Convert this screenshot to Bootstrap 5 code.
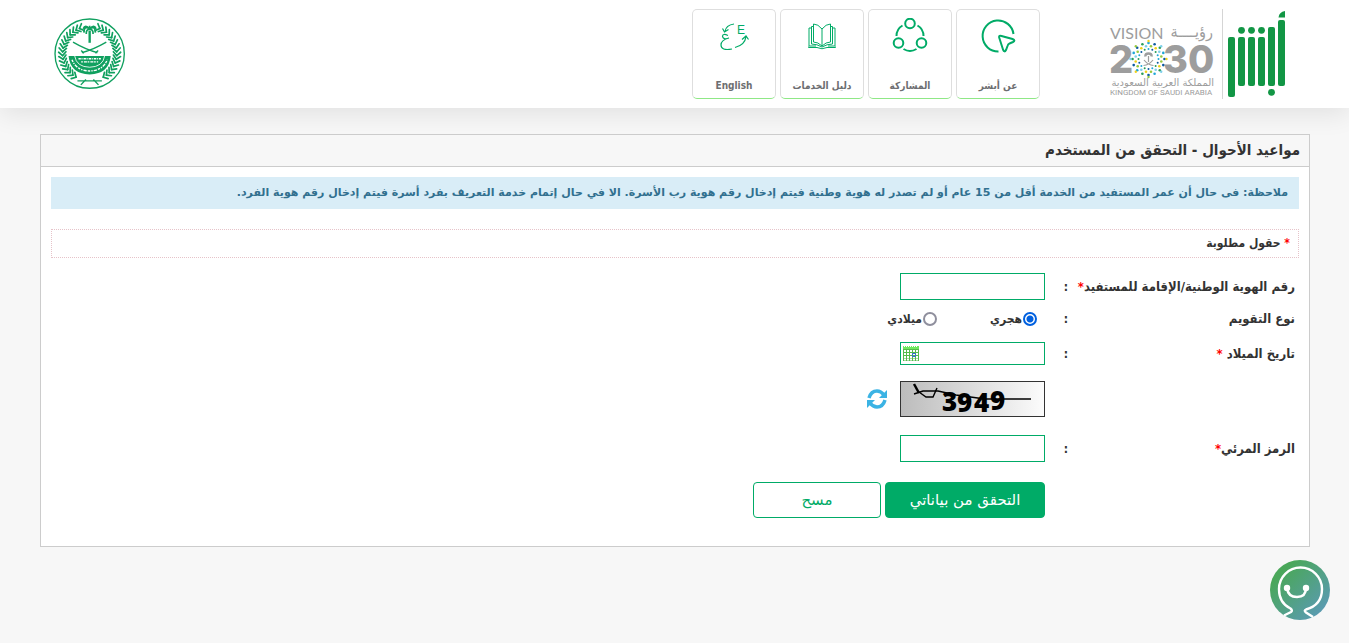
<!DOCTYPE html>
<html lang="ar" dir="rtl">
<head>
<meta charset="utf-8">
<meta name="viewport" content="width=device-width, initial-scale=1">
<title>مواعيد الأحوال - التحقق من المستخدم</title>
<link href="https://cdn.jsdelivr.net/npm/bootstrap@5.3.0/dist/css/bootstrap.min.css" rel="stylesheet">
<style>
:root{--absher:#00ab67;--ink:#333}
body{background:#f7f7f7;color:var(--ink);font-family:"DejaVu Sans Condensed","DejaVu Sans",sans-serif;font-size:12px;font-weight:700;line-height:20px}
.top-bar{background:#fff;min-height:108px;padding:9px 61px 7px 54px;box-shadow:0 6px 24px rgba(0,0,0,.09)}
.brand{width:180px;height:92px;display:block;margin-top:-1px;overflow:visible}
.tiles{margin-right:68px;gap:4px}
.tile{width:84px;height:90px;border:1px solid #dedede;border-bottom-color:#8fe886;border-radius:5px;background:#fff;color:#6d6e71;font-size:10px;line-height:16px;text-decoration:none;padding:8px 0 4px}
.tile svg{width:36px;height:36px;fill:none;stroke:var(--absher);stroke-width:2}
.moi{width:72px;height:72px;margin-top:9px;margin-right:auto}
.page-wrap{padding:26px 39px 0 40px}
.panel{background:#fff;border:1px solid #ccc;padding-bottom:28px}
.panel-title{background:#f7f7f7;border-bottom:1px solid #ccc;font-size:15px;font-weight:700;line-height:20px;padding:5px 9px 6px;margin:0}
.panel-main{padding:10px 10px 0}
.note{background:#d9edf7;color:#31708f;padding:6px 11px;margin-bottom:20px;font-family:"DejaVu Sans",sans-serif;font-size:11px}
.required-box{border:1px dotted #e6c3c9;padding:3px 8px 4px;margin-bottom:15px}
.star{color:#f00}
.field{display:grid;grid-template-columns:227px 27px 1fr;align-items:center}
.field>.name{padding-right:4px;white-space:nowrap;font-size:13px}
.field-id{margin-bottom:9px}
.field-type{margin-bottom:13px}
.captcha-row{margin-bottom:18px}
.code-row{margin-bottom:20px}
.colon{padding-right:4px}
.choices{padding-right:8px}
.choice{width:100px;gap:1px}
.captcha{gap:13px}
.captcha-art{overflow:visible}
.entry{width:145px;height:27px;border:1px solid var(--absher);border-radius:0;background:#fff;padding:2px 6px}
.entry.short{height:23px}
.date-box{position:relative;width:145px;height:23px}
.cal{position:absolute;left:3px;top:3px;border:0;background:none;padding:0;width:16px;height:16px;line-height:0}
.pick{appearance:none;width:14px;height:14px;border:2px solid #8f8f9d;border-radius:50%;margin:0;background:#fff}
.pick:checked{border-color:#0060df;background:radial-gradient(circle,#0060df 3px,#fff 4px)}
.act{height:36px;border:1px solid var(--absher);border-radius:4px;font-family:"DejaVu Sans",sans-serif;font-size:15px;font-weight:400;padding:0}
.act-go{width:160px;background:var(--absher);color:#fff}
.act-clear{width:128px;background:#fff;color:var(--absher)}
.refresh{border:0;background:none;padding:0;width:20px;height:20px;line-height:0}
.helper{position:fixed;right:19px;bottom:23px;width:60px;height:60px;border:0;background:none;padding:0}
</style>
</head>
<body>
<header class="top-bar d-flex align-items-start">
  <a href="#" aria-label="أبشر">
  <svg class="brand" viewBox="0 0 180 92" direction="ltr">
    <g fill="#129645">
      <rect x="120" y="29" width="7" height="60" rx="2"/>
      <rect x="130" y="29" width="7" height="49" rx="2"/>
      <rect x="140" y="29" width="7" height="49" rx="2"/>
      <rect x="150" y="29" width="7" height="49" rx="2"/>
      <rect x="160" y="19" width="7" height="59" rx="2"/>
      <rect x="170" y="12" width="7" height="66" rx="2"/>
      <path d="M170.500 9.500Q171 4 177 3V9.500Z"/>
      <circle cx="133.500" cy="22.300" r="3.400"/><circle cx="143.500" cy="22.300" r="3.400"/><circle cx="153.500" cy="22.300" r="3.400"/><circle cx="163.500" cy="84.300" r="3.400"/>
    </g>
    <path d="M114.500 1V91" stroke="#d5d5d5"/>
    <g fill="#9d9d9d" direction="ltr">
      <text x="2" y="31" font-family="Lato" font-weight="400" font-size="16">VISION</text>
      <text x="105" y="29" direction="rtl" font-family="DejaVu Sans Condensed" font-weight="400" font-size="16">رؤيــــة</text>
      <text x="1" y="65" font-family="Inter" font-weight="800" font-size="38">2</text>
      <text x="55" y="65" font-family="Inter" font-weight="800" font-size="38">30</text>
      <text x="106" y="78" direction="rtl" font-family="DejaVu Sans" font-weight="400" font-size="10">المملكة العربية السعودية</text>
      <text x="2" y="87" font-family="Roboto" font-weight="400" font-size="8">KINGDOM OF SAUDI ARABIA</text>
    </g>
    <g id="mosaic"></g>
    <g stroke="#9d9d9d" fill="none"><path d="M40.500 48V54M35.500 57.500Q41 57 45 52M45.500 57.500Q40 57 36 52" stroke-width="1.200"/><path d="M37.500 48.500Q37 45.500 40.500 45.500T43.500 48.500" stroke-width="2.500"/></g>
  </svg></a>

  <nav class="tiles d-flex">
    <a class="tile d-flex flex-column align-items-center justify-content-between" href="#">
      <svg viewBox="0 0 36 36"><path d="M33.500 16A15.500 15.500 0 1 0 18.500 33.500M19.500 20.500Q18 17 21.500 18L32.500 21Q36 22.500 33 24L29.500 25.500Q28 26 27.500 28L26 32Q24.500 35 23 31.500Z"/></svg>عن أبشر</a>
    <a class="tile d-flex flex-column align-items-center justify-content-between" href="#">
      <svg viewBox="0 0 36 36"><circle cx="18" cy="5.500" r="4.800"/><circle cx="6.500" cy="25" r="4.800"/><circle cx="29.500" cy="25" r="4.800"/><path d="M10.500 7.500Q4.500 11 4.500 18M25.500 7.500Q31.500 11 31.500 18M11.500 31Q18 35 24.500 31"/></svg>المشاركة</a>
    <a class="tile d-flex flex-column align-items-center justify-content-between" href="#">
      <svg viewBox="0 0 36 36" style="stroke-width:1"><path d="M18 11Q14 6 9.500 6V24Q14 24 18 28Q22 24 26.500 24V6Q22 6 18 11V28M9.500 8.500H7.500V26Q13 26 18 29Q23 26 28.500 26V8.500H26.500M7.500 10H5V28H12M28.500 10H31V28H24M4.500 28.500V29.500H13Q18 32 23 29.500H31.500V28.500"/></svg>دليل الخدمات</a>
    <a class="tile d-flex flex-column align-items-center justify-content-between" href="#" lang="en">
      <svg viewBox="0 0 36 36" style="stroke-width:1.200"><path d="M18 6Q10 7 9 13.500M6.500 10.500L8.500 14L12.500 11.500M12 17.500Q6.500 15 6.500 18.500Q7.500 22 13 20Q5 22 5 27Q5 33 16 31M19 29.500Q29 27 30 18.500M26 21.500L30 18L32.500 21.500"/><text x="21" y="16" font-family="Liberation Sans" font-size="12" font-weight="400" fill="#00ab67" stroke="none" direction="ltr">E</text></svg>English</a>
  </nav>

  <svg class="moi" viewBox="46 25 212 212" role="img" aria-label="وزارة الداخلية">
    <g fill="none" stroke="#10a05f"><circle cx="151" cy="130" r="102" stroke-width="4"/>
      <g id="laurel" stroke-width="5" stroke-linecap="round"></g>
      <g stroke-width="4"><path d="M102 96Q140 118 174 127M200 96Q162 118 128 127M126 121L134 129M176 121L168 129"/>
      <path d="M151 62V98" stroke-width="7"/>
      <path d="M151 58Q135 45 134 68M151 58Q167 45 168 68M151 58Q140 58 141 72M151 58Q162 58 161 72M151 58V48M151 58Q138 42 132 57M151 58Q164 42 170 57" stroke-width="5"/>
      <path d="M115 210H187M125 222L140 206M177 222L162 206" stroke-width="4"/></g></g>
    <path d="M89 137H213Q208 190 151 191Q94 190 89 137Z" fill="#10a05f"/>
    <g fill="none" stroke="#fff"><path d="M107 137Q112 169 151 170Q190 169 195 137" stroke-width="2.500"/><path d="M118 145H184" stroke-width="4" stroke-dasharray="7 2 3 3"/><path d="M126 154H176" stroke-width="4" stroke-dasharray="5 3 9 2"/><path d="M99 148Q112 180 151 181Q190 180 203 148" stroke-width="4" stroke-dasharray="7 3 4 3 10 3"/></g>
  </svg>
</header>

<main class="page-wrap">
  <section class="panel">
    <h1 class="panel-title">مواعيد الأحوال - التحقق من المستخدم</h1>
    <form class="panel-main" onsubmit="return false">
      <div class="note">ملاحظة: فى حال أن عمر المستفيد من الخدمة أقل من 15 عام أو لم تصدر له هوية وطنية فيتم إدخال رقم هوية رب الأسرة. الا في حال إتمام خدمة التعريف بفرد أسرة فيتم إدخال رقم هوية الفرد.</div>
      <div class="required-box"><span class="star">*</span> حقول مطلوبة</div>

      <div class="field field-id">
        <label class="name" for="nid">رقم الهوية الوطنية/الإقامة للمستفيد<span class="star">*</span></label>
        <span class="colon">:</span>
        <input class="entry" id="nid" type="text">
      </div>
      <div class="field field-type" role="radiogroup" aria-labelledby="caltype">
        <span class="name" id="caltype">نوع التقويم</span>
        <span class="colon">:</span>
        <div class="choices d-flex">
          <label class="choice d-flex align-items-center"><input class="pick" type="radio" name="calendar" checked>هجري</label>
          <label class="choice d-flex align-items-center"><input class="pick" type="radio" name="calendar">ميلادي</label>
        </div>
      </div>
      <div class="field mb-3">
        <label class="name" for="dob">تاريخ الميلاد <span class="star">*</span></label>
        <span class="colon">:</span>
        <div class="date-box">
          <input class="entry short d-block" id="dob" type="text">
          <button class="cal" type="button" aria-label="التقويم"><svg width="16" height="16" viewBox="0 0 16 16"><path fill="#55bb4a" d="M0 1H16V16H0Z"/><path fill="#6fe85f" d="M0 1H16V4H0Z"/><path d="M1 1.500H15" stroke="#fff" stroke-dasharray="1 1"/><path d="M1 6H15M1 9H15M1 12H15M1 14.500H15" stroke="#fff" stroke-width="2" stroke-dasharray="2 1"/><path d="M9.500 8.500H12.500V11.500H9.500Z" fill="none" stroke="#3b6fd4"/></svg></button>
        </div>
      </div>
      <div class="field captcha-row">
        <span></span><span></span>
        <div class="d-flex align-items-center captcha">
          <svg class="captcha-art" width="145" height="36" viewBox="0 0 145 36" role="img" aria-label="3949">
            <defs><linearGradient id="fade"><stop offset="0" stop-color="#bcbcbc"/><stop offset="1" stop-color="#fcfcfc"/></linearGradient></defs>
            <rect x=".5" y=".5" width="144" height="35" fill="url(#fade)" stroke="#333"/>
            <g fill="none" stroke="#000"><path d="M14 3L19 12" stroke-width="2.500"/><path d="M14 13L23 10H38L56 14L85 18H131" stroke-width="1.400"/><path d="M19 11L26 16H33L37 7" stroke-width="1.400"/></g>
            <g direction="ltr" font-family="Open Sans" font-size="26" font-weight="800" fill="#000"><text x="42" y="30">3</text><text x="57" y="31">9</text><text x="74" y="31">4</text><text x="90" y="29">9</text></g>
          </svg>
          <button class="refresh" type="button" aria-label="تحديث الرمز"><svg width="20" height="20" viewBox="0 0 20 20"><g fill="none" stroke="#3bb3e4" stroke-width="3.500"><path d="M2 9Q4 2 10 2Q14 2 17 6M18 11Q16 18 10 18Q6 18 3 14"/></g><path fill="#3bb3e4" d="M20 1V9H12ZM0 19V11H8Z"/></svg></button>
        </div>
      </div>
      <div class="field code-row">
        <label class="name" for="code">الرمز المرئي<span class="star">*</span></label>
        <span class="colon">:</span>
        <input class="entry" id="code" type="text">
      </div>
      <div class="field">
        <span></span><span></span>
        <div class="d-flex gap-1"><button class="act act-go" type="submit">التحقق من بياناتي</button><button class="act act-clear" type="reset">مسح</button></div>
      </div>
    </form>
  </section>
</main>

<button class="helper" type="button" aria-label="المساعدة">
  <svg width="60" height="60" viewBox="0 0 60 60"><defs><linearGradient id="glow" x2="1" y2="1"><stop offset=".2" stop-color="#4aa75a"/><stop offset=".9" stop-color="#5b9ab5"/></linearGradient></defs><circle cx="30" cy="30" r="30" fill="url(#glow)"/><path d="M14 55.500L21 52Q23 50.500 20.500 48.500Q9 43 9 29A21.500 21.500 0 0 1 52 29Q52 45 36 49.500Q33.500 50.500 36 52.500L43 57M17 28Q18 37 27 37T36 28" fill="none" stroke="#fff" stroke-width="2.400"/><circle cx="17" cy="28" r="3.200" fill="#fff"/><circle cx="36" cy="28" r="3.200" fill="#fff"/></svg>
</button>

<script src="https://cdn.jsdelivr.net/npm/bootstrap@5.3.0/dist/js/bootstrap.bundle.min.js"></script>
<script>
// Laurel leaves on both sides of the ministry seal
let leaves = '';
for (let side of [-1, 1]) for (let i = 0; i < 17; i++) {
  const a = (-68 + i * 8) * Math.PI / 180;
  const x = 151 + side * 80 * Math.cos(a), y = 130 + 80 * Math.sin(a);
  for (let spread of [-0.8, 0.8]) {
    const t = a - Math.PI / 2 + spread;
    leaves += `<path d="M${x.toFixed(1)} ${y.toFixed(1)}l${(side * 15 * Math.cos(t)).toFixed(1)} ${(15 * Math.sin(t)).toFixed(1)}"/>`;
  }
}
document.getElementById('laurel').innerHTML = leaves;
// Coloured dot mosaic in the Vision 2030 mark
const tones = ['#1fa7d8', '#97c93d', '#0c5ba0', '#f2d21b', '#2a9d58', '#7fd0ea'];
let dots = '';
[[10, 16, 1], [13, 16, 1.3], [16, 16, 1.3], [18, 8, 1.2]].forEach(([r, n, size], k) => {
  for (let i = 0; i < n; i++) {
    const a = (i + (k < 3 ? k / 2 : 0)) * 2 * Math.PI / n;
    dots += `<circle cx="${(40.5 + r * Math.cos(a)).toFixed(1)}" cy="${(51 + r * Math.sin(a)).toFixed(1)}" r="${size}" fill="${tones[(i * 2 + k) % 6]}"/>`;
  }
});
document.getElementById('mosaic').innerHTML = dots;
</script>
</body>
</html>
